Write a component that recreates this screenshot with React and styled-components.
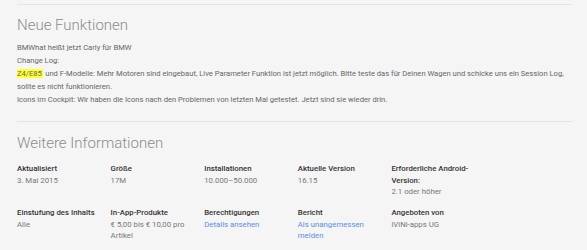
import React from "react";
import styled, { createGlobalStyle } from "styled-components";

const Global = createGlobalStyle`
  html, body { margin: 0; padding: 0; background: #f5f5f5; }
  body { font-family: Roboto, "Noto Sans", Arial, sans-serif; }
`;

const Page = styled.div`
  width: 555px;
  padding: 4px 15px 0 17px;
  background: #f5f5f5;
  min-height: 246px;
`;

const Section = styled.section`
  border-top: 1px solid #e4e4e4;
  padding-top: ${(p) => p.$top || 10}px;
  padding-bottom: ${(p) => p.$bottom || 0}px;
`;

const Heading = styled.h2`
  margin: 0;
  font-size: 15px;
  line-height: 20px;
  font-weight: 300;
  color: #8c8c8c;
`;

const Body = styled.div`
  margin-top: 6px;
  font-size: 7.6px;
  line-height: 13px;
  color: #666;
`;

const Mark = styled.span`
  background: #ffff33;
  padding-right: 1.5px;
`;

const Grid = styled.div`
  margin-top: 10.5px;
  display: grid;
  grid-template-columns: repeat(5, 93.6px);
  row-gap: 9.5px;
`;

const Cell = styled.div`
  width: 82px;
  font-size: 7.8px;
  line-height: 11.5px;
`;

const Label = styled.div`
  font-weight: 500;
  color: #333;
`;

const Value = styled.div`
  color: ${(p) => (p.$link ? "#5b8fe0" : "#777")};
`;

const info = [
  ["Aktualisiert", "3. Mai 2015"],
  ["Größe", "17M"],
  ["Installationen", "10.000–50.000"],
  ["Aktuelle Version", "16.15"],
  ["Erforderliche Android-Version:", "2.1 oder höher"],
  ["Einstufung des Inhalts", "Alle"],
  ["In-App-Produkte", "€ 5,00 bis € 10,00 pro Artikel"],
  ["Berechtigungen", "Details ansehen", true],
  ["Bericht", "Als unangemessen melden", true],
  ["Angeboten von", "iViNi-apps UG"],
];

export default function App() {
  return (
    <>
      <Global />
      <Page>
        <Section $top={10} $bottom={14.5}>
          <Heading>Neue Funktionen</Heading>
          <Body>
            BMWhat heißt jetzt Carly für BMW
            <br />
            Change Log:
            <br />
            <Mark>Z4/E85</Mark> und F-Modelle: Mehr Motoren sind eingebaut, Live Parameter Funktion ist jetzt möglich. Bitte teste das für Deinen Wagen und schicke uns ein Session Log, sollte es nicht funktionieren.
            <br />
            Icons im Cockpit: Wir haben die Icons nach den Problemen von letzten Mal getestet. Jetzt sind sie wieder drin.
          </Body>
        </Section>
        <Section $top={11}>
          <Heading>Weitere Informationen</Heading>
          <Grid>
            {info.map(([l, v, link]) => (
              <Cell key={l}>
                <Label>{l}</Label>
                <Value $link={link}>{v}</Value>
              </Cell>
            ))}
          </Grid>
        </Section>
      </Page>
    </>
  );
}
